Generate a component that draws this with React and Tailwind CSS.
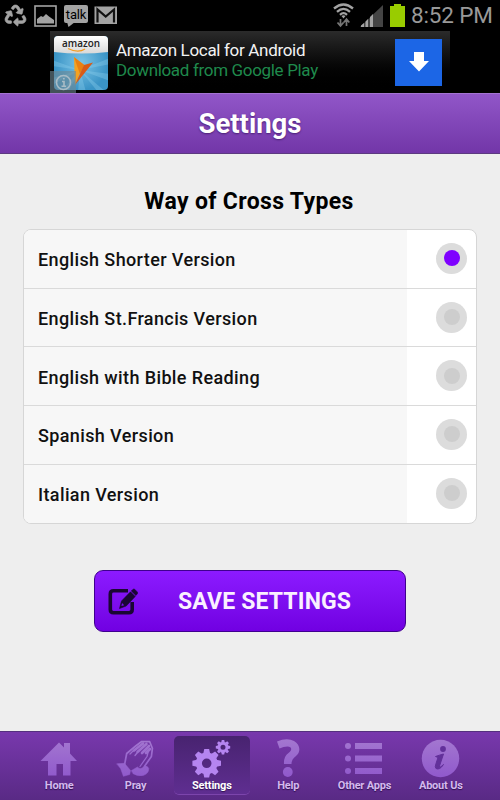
import clsx from "clsx";
import { FaRecycle } from "react-icons/fa";

const TYPES = [
  "English Shorter Version",
  "English St.Francis Version",
  "English with Bible Reading",
  "Spanish Version",
  "Italian Version",
];

function StatusBar() {
  return (
    <div className="flex h-[31px] shrink-0 items-start bg-black pl-[5px] text-[#a3a3a3]">
      <FaRecycle className="mt-[5px] size-[21px] overflow-visible" stroke="currentColor" strokeWidth="16" />
      <svg className="mt-[5px] ml-[8px]" width="23" height="22" viewBox="0 0 23 22">
        <rect x="1" y="1" width="21" height="20" fill="none" stroke="currentColor" strokeWidth="1.6" />
        <path d="M3 18.500V14l4-3 2 1 3-3 3 2.500 5 3.500v3.500z" fill="currentColor" />
      </svg>
      <div className="relative mt-[5px] ml-[7px] h-[18px] w-[24px] rounded-[2px] bg-[#a3a3a3] text-center font-['Roboto',sans-serif] text-[13px]/[19px] tracking-[-0.2px] text-black">
        talk
        <svg className="absolute top-[17px] left-[3px]" width="8" height="6" viewBox="0 0 8 6">
          <path d="M0 0h8L1.500 5z" fill="#a3a3a3" />
        </svg>
      </div>
      <svg className="mt-[6px] ml-[6px]" width="24" height="19" viewBox="0 0 24 19">
        <rect x="0.500" y="0.500" width="22.500" height="17.500" fill="currentColor" />
        <path d="M3.500 16.500V3.500l8.200 7 8.300-7v13" fill="none" stroke="#111" strokeWidth="2.200" />
      </svg>
      <svg className="mt-[3px] ml-auto" width="21" height="25" viewBox="0 0 21 25">
        <g fill="none" stroke="#a3a3a3" strokeWidth="2.300">
          <path d="M1 5.500Q10.500 -2.500 20 5.500" />
          <path d="M4 8.800Q10.500 3 17 8.800" />
          <path d="M7 11.800Q10.500 8.500 14 11.800" />
        </g>
        <path d="M8.500 13Q10.500 11.500 12.500 13L10.500 15.500z" fill="#a3a3a3" />
        <path d="M7.500 16v6M4.500 19.500l3 3.500 3-3.500M13.500 23v-6M10.700 19.500l2.800-3.500 2.800 3.500" fill="none" stroke="#777" strokeWidth="1.700" />
      </svg>
      <svg className="mt-[5px] ml-[6px]" width="23" height="22" viewBox="0 0 23 22">
        <path d="M0 22L23 0v22z" fill="#444" />
        <path d="M1 22v-1.500l3-2.500v4zM5.500 22v-5.500l2.500-2.500v8zM10 22V12l3-3v13z" fill="#a3a3a3" />
      </svg>
      <svg className="mt-[4px] ml-[7px]" width="15" height="23" viewBox="0 0 15 23">
        <path d="M0 2h4V0h7v2h4v21H0z" fill="#99cc00" />
      </svg>
      <div className="ml-[6px] w-[89px] font-['Roboto',sans-serif] text-[22.500px]/[31px] tracking-[-0.15px] whitespace-nowrap text-[#999]">
        8:52 PM
      </div>
    </div>
  );
}

function AmazonIcon() {
  return (
    <svg width="54" height="54" viewBox="0 0 54 54">
      <defs>
        <clipPath id="tile">
          <rect width="54" height="54" rx="4" />
        </clipPath>
        <radialGradient id="sky">
          <stop offset="0" stopColor="#7cc4e6" />
          <stop offset="1" stopColor="#3a94c6" />
        </radialGradient>
        <linearGradient id="cap" x2="0" y2="1">
          <stop offset="0" stopColor="#fff" />
          <stop offset="1" stopColor="#d8d8d8" />
        </linearGradient>
      </defs>
      <g clipPath="url(#tile)">
        <rect width="54" height="54" fill="url(#sky)" />
        <g fill="#8fd0ee" opacity=".35">
          <path d="M26 34L-2 24v6zM26 34L-2 42v7zM26 34L6 56h8zM26 34L24 56h8zM26 34L44 56h8zM26 34L56 38v7zM26 34L56 22v6z" />
        </g>
        <path d="M0 0h54v16q-27 3-54 0z" fill="url(#cap)" />
        <path d="M20 21l9 9-8 19z" fill="#f6a21f" />
        <path d="M20 21l10.500 8-4.500 9z" fill="#e98012" />
        <path d="M39 26.500l-9 2.500-9 20z" fill="#d95b16" />
        <path d="M14 12.500q10 5 17 .5" fill="none" stroke="#f39a1e" strokeWidth="1.300" />
      </g>
      <text x="8" y="10.500" textLength="38" lengthAdjust="spacingAndGlyphs" fontFamily="Open Sans, sans-serif" fontSize="11.500" fontWeight="600" fill="#222">
        amazon
      </text>
    </svg>
  );
}

function AdBanner() {
  return (
    <div className="flex h-[62px] shrink-0 justify-center bg-black">
      <div className="relative flex w-[400px] items-center bg-linear-to-b from-[#2b2b2b] to-black pr-[8px] pl-[54px] font-['Roboto',sans-serif]">
        <div className="absolute top-[5px] left-[4px]">
          <AmazonIcon />
        </div>
        <div className="absolute bottom-0 left-0 flex h-[22px] w-[26px] items-center justify-center bg-[#708894]/60">
          <svg width="17" height="17" viewBox="0 0 17 17" fill="none" stroke="#a9bcc6" strokeWidth="1.600">
            <circle cx="8.500" cy="8.500" r="7" />
            <path d="M7 7.500h2v4.500M6.500 12.200h4.500M8 4.700h1.700" />
          </svg>
        </div>
        <div className="flex flex-col pb-[4px] pl-[12px] text-[17px]/[20px] whitespace-nowrap">
          <span className="tracking-[-0.32px] text-[#f2f2f2]">Amazon Local for Android</span>
          <span className="tracking-[-0.33px] text-[#1f8a4c]">Download from Google Play</span>
        </div>
        <div className="ml-auto flex size-[47px] items-center justify-center bg-[#1c66e6]">
          <svg width="20" height="20" viewBox="0 0 20 20">
            <path d="M5 0h10v9h5L10 19.500 0 9h5z" fill="#fff" />
          </svg>
        </div>
      </div>
    </div>
  );
}

function Radio({ checked }) {
  return (
    <span className="flex size-[31px] items-center justify-center rounded-full bg-[#dcdcdc]">
      <span className={clsx("size-[16px] rounded-full", checked ? "bg-[#7f00ff]" : "bg-[#cdcdcd]")} />
    </span>
  );
}

function TypeList() {
  return (
    <ul className="mx-[23px] mt-[13px] flex h-[294.500px] flex-col divide-y divide-[#dadada] overflow-hidden rounded-[8px] border border-[#d6d6d6] bg-white">
      {TYPES.map((type, i) => (
        <li key={type} className="flex flex-1">
          <span className="flex flex-1 items-center bg-[#f7f7f7] pt-[2px] pl-[14px] font-['Roboto',sans-serif] text-[18px] font-medium tracking-[0.38px] text-[#111]">
            {type}
          </span>
          <span className="flex w-[69px] items-center justify-end pr-[9px] pb-px">
            <Radio checked={i === 0} />
          </span>
        </li>
      ))}
    </ul>
  );
}

function SaveButton() {
  return (
    <button className="mt-[46.500px] ml-[94px] flex h-[62px] w-[312px] items-center rounded-[9px] border border-[#3f008f] bg-linear-to-b from-[#8c1aff] to-[#7100e2] pl-[13px]">
      <svg width="30" height="27" viewBox="0 0 30 27">
        <path d="M20 2.800H5.500Q2.300 2.800 2.300 6v15.500q0 3.200 3.200 3.200H21q3.200 0 3.200-3.200V14" fill="none" stroke="#1a0733" strokeWidth="3.600" />
        <path d="M11.500 20.500l2-7.500L22.500 3.800l4.700 4.700-9 9.500zM23.300 3l1.600-1.600q1-.8 2 0l2.300 2.500q.9 1 0 2l-1.300 1.600z" fill="#1a0733" stroke="#1a0733" strokeWidth=".6" />
        <path d="M14 15l2.200 2.200-2.800.9z" fill="#7b0cf0" />
      </svg>
      <span className="ml-[40px] pt-[2px] font-['Roboto',sans-serif] text-[23px] font-bold tracking-[0.15px] whitespace-nowrap text-[#faf0ff]">
        SAVE SETTINGS
      </span>
    </button>
  );
}

// ring plus eight tapered teeth, r is the tip radius
function Gear({ cx, cy, r, hole }) {
  const body = r * 0.76;
  return (
    <g transform={`translate(${cx} ${cy})`}>
      <circle r={(body + hole) / 2} fill="none" stroke="#b585f0" strokeWidth={body - hole} />
      {[0, 45, 90, 135, 180, 225, 270, 315].map((a) => (
        <path
          key={a}
          transform={`rotate(${a}) scale(${r})`}
          d="M-.24 -.68L-.17 -1H.17L.24 -.68z"
          fill="#b585f0"
        />
      ))}
    </g>
  );
}

const TABS = [
  {
    label: "Home",
    icon: <path d="M2.500 22L21 3.500l5 5V4h6v10.500l7 7.500h-6.500v14.500h-7.500V25h-6.500v11.500H10V22z" fill="url(#lilac)" />,
  },
  {
    label: "Pray",
    icon: (
      <g fill="url(#lilac)" stroke="url(#lilac)" strokeLinecap="round" strokeLinejoin="round">
        <path d="M3 24.800l7.500-.5 6 7.200-.8 4-6.300 1.800-2.700-7.500z" strokeWidth=".5" />
        <path d="M17.500 31.500l6-3.500q3 3.500 6.500-.7 3.500-.8 4.700 2 .3 5-5 7-6 1.500-10.500-1.500z" strokeWidth=".5" />
        <g fill="none">
          <path d="M10.700 25l2-10.500 9-7.500 6-4.500 8 .2 2.700 6.600-1 8.200-6.700 9.500" strokeWidth="1.700" />
          <path d="M34.500 11.500l-1.500 6-7 10" strokeWidth="1.300" />
          <path d="M29 4.500l-9 7M32.500 5l-9 8M35 7l-7 7M36 10l-4 4" strokeWidth="2.600" />
          <path d="M19 12l-3 3M23 14l-2 2.500" strokeWidth="1.300" />
        </g>
      </g>
    ),
  },
  {
    label: "Settings",
    icon: (
      <>
        <Gear cx={15.700} cy={24.300} r={14.300} hole={4.800} />
        <Gear cx={32} cy={8.200} r={7.200} hole={2.500} />
      </>
    ),
  },
  {
    label: "Help",
    icon: (
      <>
        <path d="M10 2.500Q20-1.500 27 2C33.500 5.500 34 13 29 17q-4.500 3-4.500 8H17q-.5-7.500 4.500-11c4-3 3.500-6.500-1-6.500q-4 0-8 2z" fill="url(#lilac)" />
        <circle cx="20.800" cy="33" r="4.900" fill="url(#lilac)" />
      </>
    ),
  },
  {
    label: "Other Apps",
    icon: (
      <g fill="url(#lilac)">
        <path d="M12 4h27v6H12zM12 16.500h27v6H12zM12 29h27v6H12z" />
        <circle cx="5" cy="7" r="3" />
        <circle cx="5" cy="19.500" r="3" />
        <circle cx="5" cy="32" r="3" />
      </g>
    ),
  },
  {
    label: "About Us",
    icon: (
      <>
        <circle cx="20.500" cy="19.500" r="18.700" fill="url(#lilac)" />
        <circle cx="23" cy="10" r="2.900" fill="#62309a" />
        <path d="M15.500 17.500q4-1.500 8-2.500l-4 12q-.7 3 4-1.500-4 6-7.500 4-1.500-1 0-5l2-6z" fill="#62309a" stroke="#62309a" />
      </>
    ),
  },
];

function TabBar({ active }) {
  return (
    <nav className="flex h-[69px] shrink-0 border-t border-[#54307e] bg-linear-to-b from-[#7838ad] to-[#592a85] px-[21px] pt-[4px] pb-[6px]">
      {TABS.map(({ label, icon }) => (
        <div
          key={label}
          className={clsx(
            "flex flex-1 flex-col items-center rounded-[5px] pt-[3px]",
            label === active && "bg-linear-to-b from-[#482370] to-[#5f2e91] shadow-[0_1px_0_#7c45ac]",
          )}
        >
          <svg width="42" height="39" viewBox="0 0 42 39">
            {icon}
          </svg>
          <span
            className={clsx(
              "font-['Roboto',sans-serif] text-[11px]/[15px] font-bold tracking-[-0.2px] whitespace-nowrap [text-shadow:0_1px_1px_#301050]",
              label === active ? "text-white" : "text-[#d4b9ee]",
            )}
          >
            {label}
          </span>
        </div>
      ))}
    </nav>
  );
}

export default function App() {
  return (
    <div className="flex h-[800px] w-[500px] flex-col overflow-hidden bg-[#eeeeee]">
      <svg width="0" height="0" className="absolute">
        <linearGradient id="lilac" gradientUnits="userSpaceOnUse" x1="0" y1="0" x2="0" y2="38">
          <stop offset="0" stopColor="#a377d0" />
          <stop offset="1" stopColor="#9059cc" />
        </linearGradient>
      </svg>
      <StatusBar />
      <AdBanner />
      <header className="flex h-[61px] shrink-0 items-center justify-center border-t border-b border-t-[#a473d2] border-b-[#5c3a80] bg-linear-to-b from-[#9156c8] to-[#7236a8] font-['Roboto',sans-serif] text-[27.500px] font-bold text-white [text-shadow:0_1px_2px_#4a2075]">
        Settings
      </header>
      <main className="flex flex-1 flex-col">
        <h2 className="mt-[33px] pt-px pr-[2px] text-center font-['Roboto',sans-serif] text-[23px]/[28px] font-bold tracking-[0.35px] text-black">
          Way of Cross Types
        </h2>
        <TypeList />
        <SaveButton />
      </main>
      <TabBar active="Settings" />
    </div>
  );
}
